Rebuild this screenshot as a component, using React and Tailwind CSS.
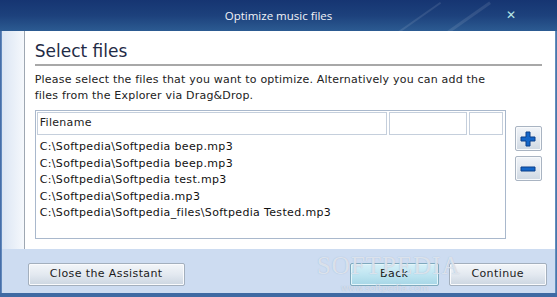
import React from 'react';

const files = [
  'C:\\Softpedia\\Softpedia beep.mp3',
  'C:\\Softpedia\\Softpedia beep.mp3',
  'C:\\Softpedia\\Softpedia test.mp3',
  'C:\\Softpedia\\Softpedia.mp3',
  'C:\\Softpedia\\Softpedia_files\\Softpedia Tested.mp3',
];

const PlusIcon = () => (
  <svg width="16" height="16" viewBox="0 0 16 16">
    <path d="M6 1h4v5h5v4h-5v5H6v-5H1V6h5z" fill="#1466c8" stroke="#0b3f8a" strokeWidth="1" />
  </svg>
);

const MinusIcon = () => (
  <svg width="16" height="16" viewBox="0 0 16 16">
    <path d="M1 6h14v4H1z" fill="#1466c8" stroke="#0b3f8a" strokeWidth="1" />
  </svg>
);

const SideButton = ({ children }) => (
  <button className="w-[27px] h-[25px] flex items-center justify-center border border-[#a9b4c2] rounded-[2px] bg-gradient-to-b from-[#f1f4f8] via-[#e2e8ef] to-[#cfd8e2] shadow-[inset_0_0_0_1px_#f8fafc]">
    {children}
  </button>
);

const FooterButton = ({ children, className = '', active = false }) => (
  <button
    className={
      'h-[23px] flex items-center justify-center text-[11px] tracking-[0.4px] text-[#1b1b1b] border rounded-[2px] ' +
      (active
        ? 'border-[#7fa9bd] bg-gradient-to-b from-[#d6f0f8] via-[#bfe5f1] to-[#a6d6e6] shadow-[inset_0_0_0_1px_#e4f6fb] '
        : 'border-[#a3afbd] bg-gradient-to-b from-[#f3f6f9] via-[#e3e9f0] to-[#ccd6e1] shadow-[inset_0_0_0_1px_#fafbfd] ') +
      className
    }
  >
    {children}
  </button>
);

export default function App() {
  return (
    <div
      className="w-[557px] h-[297px] flex flex-col bg-[#3f6aa3] overflow-hidden"
      style={{ fontFamily: '"DejaVu Sans", Verdana, sans-serif' }}
    >
      {/* Title bar */}
      <div className="relative h-[31px] shrink-0 flex items-center justify-center bg-gradient-to-b from-[#163572] via-[#1d417c] to-[#2c5b92] overflow-hidden">
        <div className="absolute right-[90px] top-[-10px] w-[3px] h-[60px] bg-white/10 rotate-[55deg]" />
        <div className="absolute right-[140px] top-[-10px] w-[2px] h-[60px] bg-white/10 rotate-[55deg]" />
        <span
          className="text-[11.5px] text-[#f2f4f8]"
          style={{ fontFamily: '"Open Sans", "Noto Sans", sans-serif' }}
        >
          Optimize music files
        </span>
        <span className="absolute right-[41px] top-[9px] text-[12px] font-bold text-[#b8e6e6] leading-none">✕</span>
      </div>

      <div className="flex flex-1 min-h-0">
        {/* left frame */}
        <div className="w-[3px] bg-gradient-to-r from-[#3a62a0] to-[#6e95c4]" />

        {/* client area */}
        <div className="flex-1 flex flex-col bg-[#cddcf1]">
          <div className="flex h-[218px]">
            <div className="w-[23px] bg-gradient-to-r from-[#dbe5f3] to-[#f5f8fc] border-r border-[#9ea7b2]" />
            <div className="flex-1 bg-white pl-[10px] pr-[13px] pt-[8px]">
              <h1 className="text-[17px] leading-[24px] text-[#1f2b46] border-b-2 border-[#a8a8a8] pb-[1px]">
                Select files
              </h1>
              <p className="mt-[6px] text-[11px] leading-[16px] text-[#222] tracking-[0.2px]">
                Please select the files that you want to optimize. Alternatively you can add the
                <br />
                files from the Explorer via Drag&amp;Drop.
              </p>

              <div className="mt-[6px] flex gap-[9px]">
                <div className="w-[471px] h-[129px] border border-[#a9b8cc] p-[1px]">
                  <div className="flex gap-[2px] h-[23px]">
                    <div className="w-[350px] border border-[#c5cfdc] flex items-center pl-[2px] text-[11px] tracking-[0.3px] text-[#222]">
                      Filename
                    </div>
                    <div className="w-[78px] border border-[#c5cfdc]" />
                    <div className="w-[34px] border border-[#c5cfdc]" />
                  </div>
                  <div className="pt-[4px] pl-[3px] tracking-[0.35px]">
                    {files.map((f, i) => (
                      <div key={i} className="h-[16.5px] leading-[16.5px] text-[11px] text-[#111]">
                        {f}
                      </div>
                    ))}
                  </div>
                </div>
                <div className="flex flex-col gap-[5px] pt-[16px]">
                  <SideButton>
                    <PlusIcon />
                  </SideButton>
                  <SideButton>
                    <MinusIcon />
                  </SideButton>
                </div>
              </div>
            </div>
          </div>

          {/* footer */}
          <div className="relative flex-1 flex items-start pt-[14px] pl-[26px] pr-[8px]">
            <FooterButton className="w-[157px]">Close the Assistant</FooterButton>
            <div className="flex-1" />
            <FooterButton active className="w-[89px]">Back</FooterButton>
            <FooterButton className="w-[98px] ml-[10px]">Continue</FooterButton>

            <div
              className="absolute left-[315px] top-[-2px] text-[25px] tracking-[1px] text-white/60 [text-shadow:0_0_1px_#9fb2cc] pointer-events-none"
              style={{ fontFamily: '"Liberation Serif", serif' }}
            >
              SOFTPEDIA
            </div>
            <div className="absolute left-[339px] top-[33px] text-[9px] text-white/50 [text-shadow:0_0_1px_#9fb2cc] pointer-events-none">
              www.softpedia.com
            </div>
          </div>
        </div>

        {/* right frame */}
        <div className="w-[4px] bg-gradient-to-r from-[#6e9ac4] to-[#3f6aa3]" />
      </div>

      {/* bottom frame */}
      <div className="h-[4px] shrink-0 bg-[#3f6aa3]" />
    </div>
  );
}
